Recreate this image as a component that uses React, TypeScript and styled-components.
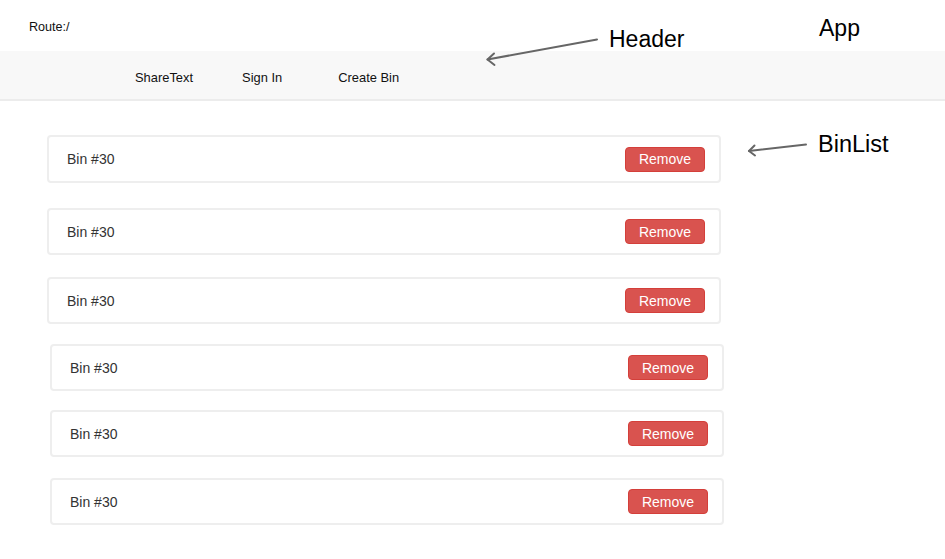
import React from "react";
import styled, { createGlobalStyle } from "styled-components";

const GlobalStyle = createGlobalStyle`
  html, body { margin: 0; padding: 0; background: #ffffff; }
  body { font-family: "Liberation Sans", Arial, sans-serif; color: #333; }
  * { box-sizing: border-box; }
`;

const Page = styled.div`
  position: relative;
  width: 945px;
  height: 559px;
  overflow: hidden;
  background: #fff;
`;

const RouteBar = styled.div`
  height: 51px;
  padding: 20px 0 0 29px;
  font-size: 12.6px;
  line-height: 14px;
  color: #111;
`;

const HeaderBar = styled.nav`
  height: 50px;
  background: #f8f8f8;
  border-bottom: 2px solid #ececec;
  display: flex;
  align-items: center;
  padding-left: 135px;
  padding-top: 4px;
`;

const NavLink = styled.span<{ $gap: number }>`
  font-size: 12.9px;
  line-height: 15px;
  color: #111;
  margin-left: ${(p) => p.$gap}px;
`;

const List = styled.div`
  display: flex;
  flex-direction: column;
`;

const Card = styled.div<{ $top: number; $left: number; $h: number }>`
  margin-top: ${(p) => p.$top}px;
  margin-left: ${(p) => p.$left}px;
  width: 674px;
  height: ${(p) => p.$h}px;
  border: 2px solid #eeeeee;
  border-radius: 4px;
  display: flex;
  align-items: center;
  justify-content: space-between;
  padding: 0 14px 0 18px;
`;

const BinName = styled.span`
  font-size: 14px;
  color: #333;
`;

const RemoveButton = styled.button`
  width: 80px;
  height: 25px;
  background: #d9534f;
  border: 1px solid #d43f3a;
  border-radius: 4px;
  color: #fff;
  font-family: "Liberation Sans", Arial, sans-serif;
  font-size: 14px;
  line-height: 1;
  padding: 0;
  cursor: pointer;
`;

const Annotation = styled.div<{ $x: number; $y: number; $size: number }>`
  position: absolute;
  left: ${(p) => p.$x}px;
  top: ${(p) => p.$y}px;
  font-size: ${(p) => p.$size}px;
  line-height: 1;
  color: #000;
  white-space: nowrap;
`;

const Arrows = styled.svg`
  position: absolute;
  left: 0;
  top: 0;
  pointer-events: none;
`;

const cards = [
  { top: 34, left: 47, h: 48 },
  { top: 25, left: 47, h: 47 },
  { top: 22, left: 47, h: 47 },
  { top: 20, left: 50, h: 47 },
  { top: 19, left: 50, h: 47 },
  { top: 21, left: 50, h: 47 },
];

export default function App() {
  return (
    <Page>
      <GlobalStyle />
      <RouteBar>Route:/</RouteBar>
      <HeaderBar>
        <NavLink $gap={0}>ShareText</NavLink>
        <NavLink $gap={49}>Sign In</NavLink>
        <NavLink $gap={56}>Create Bin</NavLink>
      </HeaderBar>
      <List>
        {cards.map((c, i) => (
          <Card key={i} $top={c.top} $left={c.left} $h={c.h}>
            <BinName>Bin #30</BinName>
            <RemoveButton>Remove</RemoveButton>
          </Card>
        ))}
      </List>

      <Annotation $x={609} $y={28} $size={23}>Header</Annotation>
      <Annotation $x={819} $y={17} $size={23}>App</Annotation>
      <Annotation $x={818} $y={133} $size={23.5}>BinList</Annotation>

      <Arrows width={945} height={559} viewBox="0 0 945 559">
        <g stroke="#666" strokeWidth={2} fill="none" strokeLinecap="round" strokeLinejoin="round">
          <line x1={597} y1={39.5} x2={487.5} y2={59.5} />
          <polyline points="494,53.5 487.5,59.5 494.5,65" />
          <line x1={806} y1={144.5} x2={749} y2={151} />
          <polyline points="754.5,145.5 749,151 755,155.5" />
        </g>
      </Arrows>
    </Page>
  );
}
